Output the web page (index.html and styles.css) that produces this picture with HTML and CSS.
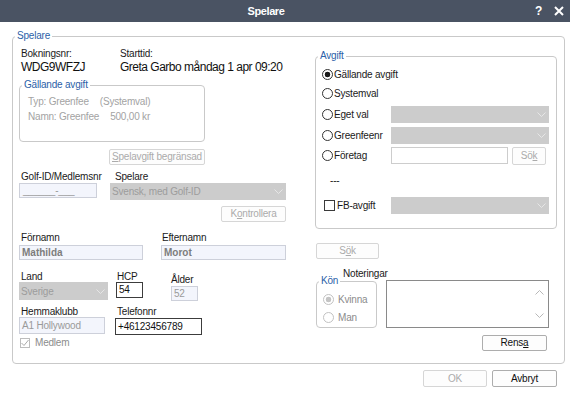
FILE: index.html
```html
<!DOCTYPE html>
<html lang="sv">
<head>
    <meta charset="UTF-8">
    <title>Spelare</title>
    <link rel="stylesheet" href="styles.css">
</head>
<body>
<div class="titlebar">
    <div class="title">Spelare</div>
    <div class="tb-btns">
        <span class="help">?</span>
        <svg class="close" width="10" height="10" viewBox="0 0 10 10"><path d="M1 1L9 9M9 1L1 9" stroke="#fff" stroke-width="2"/></svg>
    </div>
</div>
<fieldset class="group outer">
    <legend>Spelare</legend>
    <div class="cols">
        <div class="left">
            <div class="booking">
                <div class="bk-no">
                    <div class="lbl">Bokningsnr:</div>
                    <div class="big">WDG9WFZJ</div>
                </div>
                <div class="bk-time">
                    <div class="lbl">Starttid:</div>
                    <div class="big">Greta Garbo måndag 1 apr 09:20</div>
                </div>
            </div>
            <fieldset class="group fee">
                <legend>Gällande avgift</legend>
                <div class="fee-line"><span class="fee-key">Typ: Greenfee</span>(Systemval)</div>
                <div class="fee-line"><span class="fee-key">Namn: Greenfee</span>500,00 kr</div>
            </fieldset>
            <div class="btn-row r-fee">
                <button class="btn disabled b-spel"><u>S</u>pelavgift begränsad</button>
            </div>
            <div class="field-row r-golf">
                <div class="field w-golf">
                    <div class="lbl">Golf-ID/Medlemsnr</div>
                    <div class="input soft">______-___</div>
                </div>
                <div class="field w-type">
                    <div class="lbl ind">Spelare</div>
                    <div class="select">Svensk, med Golf-ID
                        <svg width="9" height="5" viewBox="0 0 9 5"><polyline points="0.5,0.5 4.5,4.5 8.5,0.5" fill="none" stroke="#e6e6e6"/></svg>
                    </div>
                </div>
            </div>
            <div class="btn-row r-check">
                <button class="btn disabled b-check">K<u>o</u>ntrollera</button>
            </div>
            <div class="field-row r-name">
                <div class="field w-first">
                    <div class="lbl">Förnamn</div>
                    <div class="input soft bold">Mathilda</div>
                </div>
                <div class="field w-last">
                    <div class="lbl">Efternamn</div>
                    <div class="input soft bold">Morot</div>
                </div>
            </div>
            <div class="field-row r-land">
                <div class="field w-land">
                    <div class="lbl">Land</div>
                    <div class="select tall">Sverige
                        <svg width="9" height="5" viewBox="0 0 9 5"><polyline points="0.5,0.5 4.5,4.5 8.5,0.5" fill="none" stroke="#e6e6e6"/></svg>
                    </div>
                </div>
                <div class="field w-hcp">
                    <div class="lbl">HCP</div>
                    <div class="input dark short">54</div>
                </div>
                <div class="field w-age">
                    <div class="lbl">Ålder</div>
                    <div class="input soft">52</div>
                </div>
            </div>
            <div class="field-row r-club">
                <div class="field w-club">
                    <div class="lbl">Hemmaklubb</div>
                    <div class="input soft tall">A1 Hollywood</div>
                </div>
                <div class="field w-phone">
                    <div class="lbl">Telefonnr</div>
                    <div class="input dark tall">+46123456789</div>
                </div>
            </div>
            <div class="member">
                <span class="check on">
                    <svg width="8" height="8" viewBox="0 0 8 8"><polyline points="0.5,4 3,6.5 7.5,1" fill="none" stroke="#aaa"/></svg>
                </span>
                Medlem
            </div>
        </div>

        <div class="right">
            <fieldset class="group choice">
                <legend>Avgift</legend>
                <div class="opt first"><span class="opt-lbl"><span class="radio on"></span>Gällande avgift</span></div>
                <div class="opt"><span class="opt-lbl"><span class="radio"></span>Systemval</span></div>
                <div class="opt ctl r-own"><span class="opt-lbl"><span class="radio"></span>Eget val</span>
                    <div class="select grow">
                        <svg width="9" height="5" viewBox="0 0 9 5"><polyline points="0.5,0.5 4.5,4.5 8.5,0.5" fill="none" stroke="#e6e6e6"/></svg>
                    </div>
                </div>
                <div class="opt ctl r-gf"><span class="opt-lbl"><span class="radio"></span>Greenfeenr</span>
                    <div class="select grow">
                        <svg width="9" height="5" viewBox="0 0 9 5"><polyline points="0.5,0.5 4.5,4.5 8.5,0.5" fill="none" stroke="#e6e6e6"/></svg>
                    </div>
                </div>
                <div class="opt ctl r-comp"><span class="opt-lbl"><span class="radio"></span>Företag</span>
                    <div class="input plain comp"></div>
                    <button class="btn disabled b-sok">Sö<u>k</u></button>
                </div>
                <div class="dashes">---</div>
                <div class="opt ctl r-fb"><span class="opt-lbl"><span class="check box"></span>FB-avgift</span>
                    <div class="select grow">
                        <svg width="9" height="5" viewBox="0 0 9 5"><polyline points="0.5,0.5 4.5,4.5 8.5,0.5" fill="none" stroke="#e6e6e6"/></svg>
                    </div>
                </div>
            </fieldset>
            <button class="btn disabled b-search">S<u>ö</u>k</button>
            <div class="notes-area">
                <fieldset class="group gender">
                    <legend>Kön</legend>
                    <div class="g-opt"><span class="radio dim on"></span>Kvinna</div>
                    <div class="g-opt"><span class="radio dim"></span>Man</div>
                </fieldset>
                <div class="notes">
                    <div class="notes-lbl">Noteringar</div>
                    <div class="textarea">
                        <div class="scroll">
                            <svg width="9" height="5" viewBox="0 0 9 5"><polyline points="0.5,4.5 4.5,0.5 8.5,4.5" fill="none" stroke="#b8b8b8"/></svg>
                            <svg width="9" height="5" viewBox="0 0 9 5"><polyline points="0.5,0.5 4.5,4.5 8.5,0.5" fill="none" stroke="#b8b8b8"/></svg>
                        </div>
                    </div>
                </div>
            </div>
            <div class="btn-row r-clear">
                <button class="btn b-clear">Rens<u>a</u></button>
            </div>
        </div>
    </div>
</fieldset>
<div class="footer">
    <button class="btn disabled b-ok">OK</button>
    <button class="btn b-cancel">Avbryt</button>
</div>
</body>
</html>
```

FILE: styles.css
```css
* {
    box-sizing: border-box;
}
body {
    margin: 0;
    width: 570px;
    height: 400px;
    overflow: hidden;
    background: #fff;
    color: #1a1a1a;
    font-family: "Liberation Sans", Arial, sans-serif;
    font-size: 10px;
    letter-spacing: -0.2px;
}
u {
    text-decoration: underline;
}

/* title bar */
.titlebar {
    height: 22px;
    background: #4a5363;
    color: #fff;
    display: flex;
    align-items: center;
}
.titlebar .title {
    flex: 1;
    text-align: center;
    font-weight: bold;
    font-size: 11px;
    letter-spacing: -0.4px;
}
.tb-btns {
    width: 38px;
    display: flex;
    align-items: center;
}
.tb-btns .help {
    font-weight: bold;
    font-size: 12px;
    margin-left: 3px;
}
.tb-btns .close {
    margin-left: 12px;
}

/* group boxes */
.group {
    border: 1px solid #c9c9c9;
    border-radius: 4px;
    margin: 0;
    padding: 0;
    min-width: 0;
}
.group legend {
    color: #2c5fa8;
    line-height: 12px;
    padding: 0 2px;
    margin-left: 2px;
}
.outer {
    margin: 8px 5px 0 12px;
}
.cols {
    display: flex;
}
.left {
    width: 267px;
    margin-left: 6px;
}
.right {
    width: 242px;
    margin-left: 29px;
    padding-bottom: 12px;
}

/* labels */
.lbl {
    line-height: 13px;
    padding-left: 2px;
    white-space: nowrap;
}
.lbl.ind {
    padding-left: 5px;
}
.big {
    font-size: 12px;
    line-height: 14px;
    letter-spacing: -0.5px;
    padding-left: 2px;
    color: #111;
}
.booking {
    display: flex;
    margin-top: 5px;
}
.bk-no {
    width: 99px;
}

/* current fee */
.fee {
    width: 186px;
    margin-top: 5px;
    padding: 3px 0 17px 0;
}
.fee-line {
    line-height: 15px;
    color: #a3a3a3;
    padding-left: 8px;
}
.fee-key {
    margin-right: 11px;
}

/* buttons */
.btn {
    font: inherit;
    letter-spacing: inherit;
    height: 16px;
    padding: 0;
    border: 1px solid #adadad;
    border-radius: 2px;
    background: #fdfdfd;
    color: #111;
    line-height: 14px;
}
.btn.disabled {
    border-color: #d6d6d6;
    color: #ababab;
}
.btn-row {
    display: flex;
    justify-content: flex-end;
}
.r-fee {
    width: 186px;
    margin-top: 7px;
}
.b-spel {
    width: 96px;
}
.r-check {
    margin-top: 6px;
}
.b-check {
    width: 65px;
}

/* fields */
.field-row {
    display: flex;
}
.field {
    display: flex;
    flex-direction: column;
}
.input {
    height: 15px;
    line-height: 13px;
    padding: 0 2px;
    white-space: nowrap;
}
.input.soft {
    background: #f3f5fc;
    border: 1px solid #cdd0da;
    color: #9a9a9a;
}
.input.dark {
    background: #fff;
    border: 1px solid #3c3c3c;
    color: #111;
}
.input.plain {
    background: #fff;
    border: 1px solid #cdcdcd;
}
.input.bold {
    font-weight: bold;
    color: #7d7d7d;
    letter-spacing: 0;
}
.input.tall {
    height: 17px;
    line-height: 15px;
}
.input.short {
    height: 16px;
    line-height: 14px;
}
.select {
    height: 17px;
    background: #cccccc;
    color: #9c9c9c;
    padding: 0 3px 0 2px;
    display: flex;
    align-items: center;
    justify-content: space-between;
    white-space: nowrap;
}
.select.tall {
    height: 18px;
}
.select svg {
    margin-left: auto;
}
.r-golf {
    margin-top: 5px;
}
.w-golf {
    width: 78px;
}
.w-golf .input {
    padding-left: 3px;
}
.w-type {
    width: 176px;
    margin-left: 13px;
}
.r-name {
    margin-top: 9px;
}
.r-name .input {
    margin-top: 1px;
}
.w-first {
    width: 124px;
}
.w-last {
    width: 125px;
    margin-left: 18px;
}
.w-last .lbl {
    padding-left: 1px;
}
.r-land {
    margin-top: 11px;
}
.r-land .lbl {
    line-height: 11px;
}
.w-land {
    width: 89px;
}
.w-hcp {
    width: 27px;
    margin-left: 8px;
}
.w-hcp .lbl {
    padding-left: 1px;
}
.w-age {
    width: 27px;
    margin-left: 28px;
}
.w-age .lbl {
    margin-top: 3px;
    line-height: 12px;
    padding-left: 0;
}
.r-club {
    margin-top: 6px;
}
.r-club .lbl {
    line-height: 10px;
}
.w-club {
    width: 86px;
}
.w-phone {
    width: 87px;
    margin-left: 10px;
}
.w-phone .input {
    margin-top: 1px;
}

/* check boxes and radios */
.member {
    display: flex;
    align-items: center;
    margin-top: 2px;
    margin-left: 1px;
    color: #8c8c8c;
    line-height: 11px;
}
.check {
    width: 11px;
    height: 11px;
    border: 1px solid #3a3a3a;
    background: #fff;
    display: inline-flex;
    align-items: center;
    justify-content: center;
}
.check.on {
    width: 10px;
    height: 10px;
    border-color: #bdbdbd;
    margin-right: 5px;
}
.check.box {
    margin-left: 2px;
    margin-right: 2px;
}
.radio {
    width: 11px;
    height: 11px;
    border: 1px solid #333;
    border-radius: 50%;
    background: #fff;
    margin-right: 1px;
    flex: none;
}
.radio.on {
    background: radial-gradient(circle, #1a1a1a 0 2.6px, #fff 3.1px);
}
.radio.dim {
    border-color: #c2c2c2;
    margin-left: 6px;
    margin-right: 4px;
}
.radio.dim.on {
    background: radial-gradient(circle, #c4c4c4 0 2.6px, #fff 3.1px);
}

/* fee choice */
.choice {
    margin-top: 8px;
    padding: 0 7px 14px 0;
}
.opt {
    display: flex;
    align-items: center;
    height: 19px;
    margin-left: 6px;
}
.opt.first {
    margin-top: 3px;
}
.opt.ctl {
    height: 17px;
}
.opt-lbl {
    width: 69px;
    flex: none;
    display: flex;
    align-items: center;
    white-space: nowrap;
}
.r-own {
    margin-top: 3px;
}
.r-gf {
    margin-top: 4px;
}
.r-comp {
    margin-top: 3px;
    height: 18px;
}
.grow {
    flex: 1;
}
.comp {
    width: 117px;
    height: 17px;
}
.b-sok {
    width: 34px;
    height: 18px;
    margin-left: 4px;
}
.dashes {
    margin-top: 10px;
    margin-left: 14px;
    line-height: 13px;
}
.r-fb {
    margin-top: 10px;
}
.b-search {
    width: 63px;
    margin-top: 14px;
    margin-left: 1px;
}

/* gender and notes */
.notes-area {
    display: flex;
    align-items: flex-start;
    margin-top: 8px;
}
.gender {
    width: 61px;
    margin-top: 8px;
    margin-left: 1px;
    padding: 3px 0 1px;
}
.g-opt {
    height: 18px;
    display: flex;
    align-items: center;
    color: #8c8c8c;
}
.notes {
    margin-left: 9px;
}
.notes-lbl {
    line-height: 13px;
    margin-left: -43px;
}
.textarea {
    width: 163px;
    height: 48px;
    border: 1px solid #8a8a8a;
    background: #fff;
    display: flex;
}
.scroll {
    width: 17px;
    margin-left: auto;
    display: flex;
    flex-direction: column;
    justify-content: space-between;
    align-items: center;
    padding: 9px 0;
}
.r-clear {
    margin-top: 7px;
    margin-right: 10px;
}
.b-clear {
    width: 65px;
}

/* footer */
.footer {
    display: flex;
    justify-content: flex-end;
    gap: 5px;
    margin-top: 6px;
    padding-right: 13px;
}
.b-ok {
    width: 64px;
    height: 17px;
}
.b-cancel {
    width: 65px;
    height: 17px;
}
```
